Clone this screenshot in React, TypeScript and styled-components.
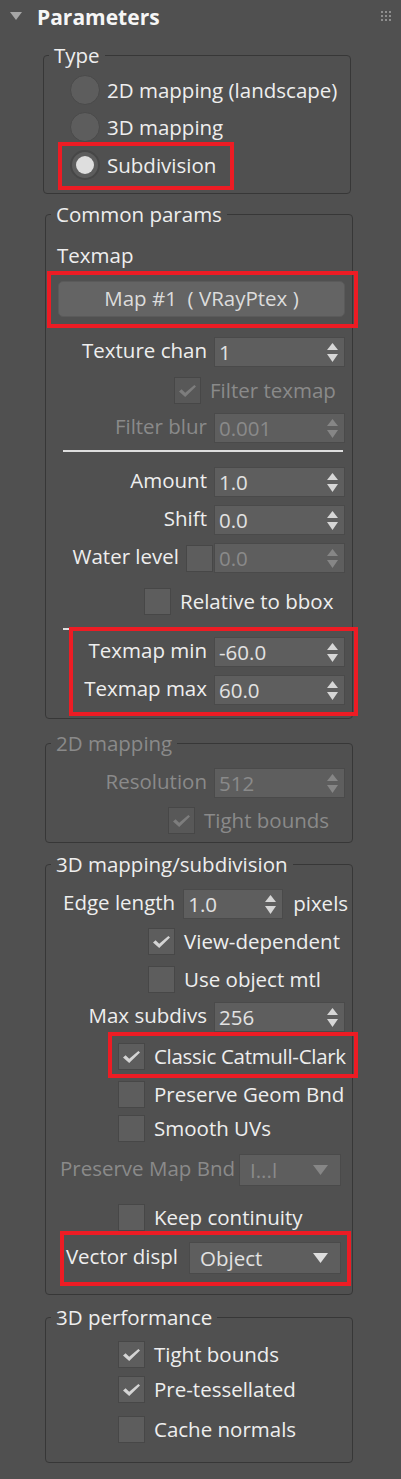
import React from "react";
import styled, { createGlobalStyle, css } from "styled-components";

const GlobalStyle = createGlobalStyle`
  html, body { margin: 0; padding: 0; background: #505050; }
  #root { width: 401px; min-height: 1479px; }
`;

const TEXT = "#eeeeee";
const DIM = "#8a8a8a";

const Panel = styled.div`
  width: 401px;
  min-height: 1479px;
  background: #505050;
  color: ${TEXT};
  font-family: "Open Sans", "Noto Sans", sans-serif;
  font-size: 20.5px;
  line-height: 24px;
  overflow: hidden;
`;

const Header = styled.div`
  height: 34px;
  display: flex;
  align-items: center;
  padding: 0 10px;
`;

const Caret = styled.svg`
  flex-shrink: 0;
  margin-bottom: 2px;
`;

const Title = styled.div`
  flex: 1;
  margin-left: 15px;
  font-weight: 700;
  font-size: 21px;
  line-height: 34px;
  color: #f6f6f6;
`;

const Grip = styled.div`
  display: grid;
  grid-template-columns: repeat(3, 2px);
  grid-auto-rows: 2px;
  gap: 2px;
  margin-bottom: 2px;
`;

const Dot = styled.span`
  background: #8e8e8e;
`;

const Group = styled.fieldset<{ $left?: number; $mt: number; $pb: number }>`
  box-sizing: border-box;
  width: 308px;
  min-width: 0;
  margin: ${(p) => p.$mt}px 0 0 ${(p) => p.$left ?? 45}px;
  padding: 0 7px ${(p) => p.$pb}px 0;
  border: 1px solid #373737;
  border-radius: 4px;
`;

const Legend = styled.legend<{ $disabled?: boolean }>`
  margin-left: 5px;
  padding: 0 5px;
  line-height: 24px;
  color: ${(p) => (p.$disabled ? DIM : TEXT)};
`;

const Body = styled.div`
  display: flex;
  flex-direction: column;
`;

const Highlight = styled.div<{ $mt: number; $t: number; $r: number; $b: number; $l: number }>`
  position: relative;
  display: flex;
  flex-direction: column;
  margin-top: ${(p) => p.$mt}px;
  &::after {
    content: "";
    position: absolute;
    top: ${(p) => p.$t}px;
    right: ${(p) => p.$r}px;
    bottom: ${(p) => p.$b}px;
    left: ${(p) => p.$l}px;
    border: 4px solid #ed1c24;
    pointer-events: none;
  }
`;

const RadioRow = styled.div<{ $mt?: number }>`
  display: flex;
  align-items: center;
  gap: 7px;
  height: 30px;
  padding-left: 26px;
  margin-top: ${(p) => p.$mt ?? 0}px;
  white-space: nowrap;
`;

const Radio = styled.span<{ $on?: boolean }>`
  box-sizing: border-box;
  width: 30px;
  height: 30px;
  flex-shrink: 0;
  border-radius: 50%;
  background: #5d5d5d;
  border: ${(p) => (p.$on ? "2px solid #474747" : "1px solid #4a4a4a")};
  display: flex;
  align-items: center;
  justify-content: center;
  ${(p) =>
    p.$on &&
    css`
      &::after {
        content: "";
        width: 18px;
        height: 18px;
        border-radius: 50%;
        background: #dedede;
      }
    `}
`;

const SubLabel = styled.div<{ $mt: number }>`
  margin-top: ${(p) => p.$mt}px;
  padding-left: 11px;
  line-height: 24px;
`;

const MapButton = styled.button`
  box-sizing: border-box;
  width: 287px;
  height: 36px;
  margin-left: 12px;
  background: #646464;
  border: 1px solid #5a5a5a;
  border-radius: 5px;
  color: #dcdcdc;
  font: inherit;
  line-height: 24px;
  white-space: pre;
  padding: 0 0 2px;
`;

const FieldRow = styled.div<{ $mt?: number }>`
  display: grid;
  grid-template-columns: 1fr 131px;
  column-gap: 7px;
  align-items: center;
  height: 30px;
  margin-top: ${(p) => p.$mt ?? 0}px;
`;

const LabelCell = styled.div`
  display: flex;
  align-items: center;
  justify-content: flex-end;
  gap: 7px;
`;

const FieldLabel = styled.span<{ $disabled?: boolean }>`
  white-space: nowrap;
  padding-bottom: 4px;
  color: ${(p) => (p.$disabled ? DIM : TEXT)};
`;

const SpinBox = styled.div<{ $w?: number; $disabled?: boolean }>`
  box-sizing: border-box;
  height: 30px;
  width: ${(p) => (p.$w ? `${p.$w}px` : "100%")};
  flex-shrink: 0;
  background: #5e5e5e;
  border: 1px solid #4a4a4a;
  display: flex;
  align-items: center;
  justify-content: space-between;
  padding: 0 6px 0 4px;
  color: ${(p) => (p.$disabled ? DIM : "#e2e2e2")};
`;

const SpinArrows = styled.svg<{ $disabled?: boolean }>`
  flex-shrink: 0;
  fill: ${(p) => (p.$disabled ? "#868686" : "#d6d6d6")};
`;

const CheckRow = styled.div<{ $mt?: number; $indent: number }>`
  display: flex;
  align-items: center;
  gap: 9px;
  height: 30px;
  padding-left: ${(p) => p.$indent}px;
  margin-top: ${(p) => p.$mt ?? 0}px;
`;

const CheckText = styled.span<{ $disabled?: boolean; $tight?: boolean }>`
  white-space: nowrap;
  color: ${(p) => (p.$disabled ? DIM : TEXT)};
  letter-spacing: ${(p) => (p.$tight ? "-0.3px" : "normal")};
`;

const CheckBox = styled.span<{ $disabled?: boolean; $nudge?: number }>`
  box-sizing: border-box;
  width: 27px;
  height: 27px;
  flex-shrink: 0;
  background: ${(p) => (p.$disabled ? "#585858" : "#5d5d5d")};
  border: 1px solid #474747;
  display: flex;
  align-items: center;
  justify-content: center;
  color: ${(p) => (p.$disabled ? "#7d7d7d" : "#d4d4d4")};
  margin-right: ${(p) => p.$nudge ?? 0}px;
  svg {
    margin-top: 2px;
  }
`;

const InlineRow = styled.div<{ $mt: number }>`
  display: flex;
  align-items: center;
  gap: 8px;
  height: 30px;
  padding-left: 17px;
  margin-top: ${(p) => p.$mt}px;
`;

const Unit = styled.span`
  margin-left: 2px;
  padding-bottom: 3px;
`;

const SelectRow = styled.div<{ $mt?: number; $gap: number }>`
  display: flex;
  align-items: center;
  justify-content: flex-end;
  gap: ${(p) => p.$gap}px;
  height: 32px;
  padding-right: 4px;
  margin-top: ${(p) => p.$mt ?? 0}px;
`;

const SelectBox = styled.div<{ $w: number; $disabled?: boolean }>`
  box-sizing: border-box;
  width: ${(p) => p.$w}px;
  height: 32px;
  flex-shrink: 0;
  background: #5e5e5e;
  border: 1px solid #4a4a4a;
  display: flex;
  align-items: center;
  justify-content: space-between;
  padding: 0 12px 0 10px;
  color: ${(p) => (p.$disabled ? DIM : "#e2e2e2")};
  svg {
    fill: ${(p) => (p.$disabled ? "#868686" : "#dedede")};
  }
`;

const Separator = styled.div<{ $mt: number }>`
  height: 2px;
  margin: ${(p) => p.$mt}px 2px 0 17px;
  background: #dedede;
`;

function Check({ checked, disabled, nudge }: { checked?: boolean; disabled?: boolean; nudge?: number }) {
  return (
    <CheckBox $disabled={disabled} $nudge={nudge}>
      {checked && (
        <svg width="17" height="12" viewBox="0 0 17 12">
          <polygon points="0,6.6 2.6,4.3 6.2,7.8 15.4,0 17,1.6 6.2,12" fill="currentColor" />
        </svg>
      )}
    </CheckBox>
  );
}

function Spinner({ value, disabled, w }: { value: string; disabled?: boolean; w?: number }) {
  return (
    <SpinBox $disabled={disabled} $w={w}>
      <span>{value}</span>
      <SpinArrows $disabled={disabled} width="11" height="19" viewBox="0 0 11 19">
        <polygon points="0,7 5.5,0 11,7" />
        <polygon points="0,11 11,11 5.5,19" />
      </SpinArrows>
    </SpinBox>
  );
}

function Select({ value, w, disabled }: { value: string; w: number; disabled?: boolean }) {
  return (
    <SelectBox $w={w} $disabled={disabled}>
      <span>{value}</span>
      <svg width="15" height="10" viewBox="0 0 15 10">
        <polygon points="0,0 15,0 7.5,10" />
      </svg>
    </SelectBox>
  );
}

function Field({
  label,
  value,
  mt,
  disabled,
  valueDisabled,
  withCheck,
}: {
  label: string;
  value: string;
  mt?: number;
  disabled?: boolean;
  valueDisabled?: boolean;
  withCheck?: boolean;
}) {
  return (
    <FieldRow $mt={mt}>
      <LabelCell>
        <FieldLabel $disabled={disabled}>{label}</FieldLabel>
        {withCheck && <Check nudge={-6} />}
      </LabelCell>
      <Spinner value={value} disabled={disabled || valueDisabled} />
    </FieldRow>
  );
}

function CheckItem({
  label,
  checked,
  disabled,
  indent,
  mt,
  tight,
}: {
  label: string;
  checked?: boolean;
  disabled?: boolean;
  indent: number;
  mt?: number;
  tight?: boolean;
}) {
  return (
    <CheckRow $indent={indent} $mt={mt}>
      <Check checked={checked} disabled={disabled} />
      <CheckText $disabled={disabled} $tight={tight}>
        {label}
      </CheckText>
    </CheckRow>
  );
}

export default function App() {
  return (
    <>
      <GlobalStyle />
      <Panel>
        <Header>
          <Caret width="12" height="8" viewBox="0 0 12 8">
            <polygon points="0,0 12,0 6,8" fill="#a6a6a6" />
          </Caret>
          <Title>Parameters</Title>
          <Grip>
            {Array.from({ length: 9 }).map((_, i) => (
              <Dot key={i} />
            ))}
          </Grip>
        </Header>

        <Group $left={43} $mt={9} $pb={13}>
          <Legend>Type</Legend>
          <Body>
            <RadioRow $mt={8}>
              <Radio />
              <span>2D mapping (landscape)</span>
            </RadioRow>
            <RadioRow $mt={7}>
              <Radio />
              <span>3D mapping</span>
            </RadioRow>
            <Highlight $mt={8} $t={-8} $r={109} $b={-10} $l={14}>
              <RadioRow>
                <Radio $on />
                <span>Subdivision</span>
              </RadioRow>
            </Highlight>
          </Body>
        </Group>

        <Group $mt={8} $pb={13}>
          <Legend>Common params</Legend>
          <Body>
            <SubLabel $mt={17}>Texmap</SubLabel>
            <Highlight $mt={14} $t={-10} $r={-13} $b={-11} $l={1}>
              <MapButton>{"Map #1  ( VRayPtex )"}</MapButton>
            </Highlight>
            <Field label="Texture chan" value="1" mt={20} />
            <CheckItem label="Filter texmap" checked disabled indent={128} mt={8} />
            <Field label="Filter blur" value="0.001" disabled mt={8} />
            <Separator $mt={7} />
            <Field label="Amount" value="1.0" mt={15} />
            <Field label="Shift" value="0.0" mt={8} />
            <Field label="Water level" value="0.0" valueDisabled withCheck mt={8} />
            <CheckItem label="Relative to bbox" indent={98} mt={13} />
            <Separator $mt={12} />
            <Highlight $mt={7} $t={-10} $r={-13} $b={-11} $l={23}>
              <Field label="Texmap min" value="-60.0" />
              <Field label="Texmap max" value="60.0" mt={8} />
            </Highlight>
          </Body>
        </Group>

        <Group $mt={12} $pb={7}>
          <Legend $disabled>2D mapping</Legend>
          <Body>
            <Field label="Resolution" value="512" disabled mt={13} />
            <CheckItem label="Tight bounds" checked disabled indent={122} mt={7} />
          </Body>
        </Group>

        <Group $mt={9} $pb={20}>
          <Legend>3D mapping/subdivision</Legend>
          <Body>
            <InlineRow $mt={13}>
              <FieldLabel>Edge length</FieldLabel>
              <Spinner value="1.0" w={100} />
              <Unit>pixels</Unit>
            </InlineRow>
            <CheckItem label="View-dependent" checked indent={102} mt={7} />
            <CheckItem label="Use object mtl" indent={102} mt={8} />
            <Field label="Max subdivs" value="256" mt={8} />
            <Highlight $mt={9} $t={-9} $r={-13} $b={-7} $l={62}>
              <CheckItem label="Classic Catmull-Clark" checked indent={72} tight />
            </Highlight>
            <CheckItem label="Preserve Geom Bnd" indent={72} mt={8} />
            <CheckItem label="Smooth UVs" indent={72} mt={4} />
            <SelectRow $mt={11} $gap={4}>
              <FieldLabel $disabled>Preserve Map Bnd</FieldLabel>
              <Select value="I...l" w={102} disabled />
            </SelectRow>
            <CheckItem label="Keep continuity" indent={72} mt={16} />
            <Highlight $mt={10} $t={-11} $r={-6} $b={-12} $l={14}>
              <SelectRow $gap={11}>
                <FieldLabel>Vector displ</FieldLabel>
                <Select value="Object" w={152} />
              </SelectRow>
            </Highlight>
          </Body>
        </Group>

        <Group $mt={10} $pb={18}>
          <Legend>3D performance</Legend>
          <Body>
            <CheckItem label="Tight bounds" checked indent={72} mt={10} />
            <CheckItem label="Pre-tessellated" checked indent={72} mt={5} />
            <CheckItem label="Cache normals" indent={72} mt={10} />
          </Body>
        </Group>
      </Panel>
    </>
  );
}
